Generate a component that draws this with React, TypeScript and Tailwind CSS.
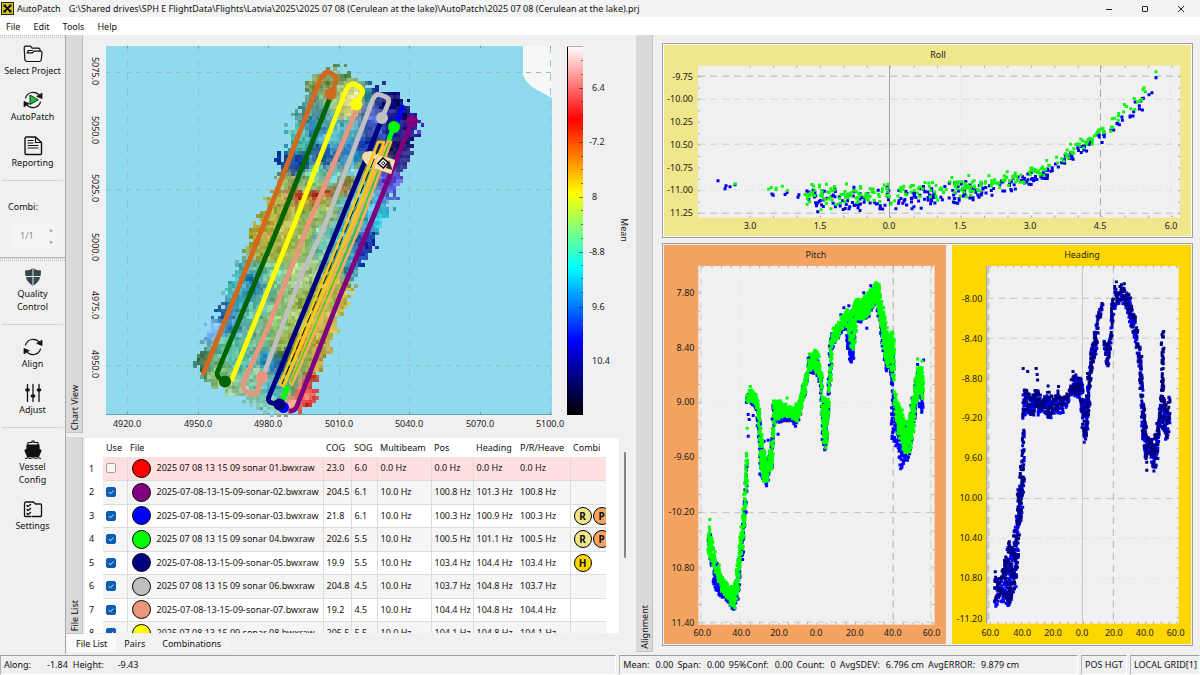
import type { ReactNode } from "react";

type Pt = [number, number];
type Band = [number, number, number];

const FONT = "font-['Noto_Sans','Open_Sans',sans-serif]";

function makeRandom(seed: number) {
  let s = seed;
  return () => {
    s = (s * 1664525 + 1013904223) % 4294967296;
    return s / 4294967296;
  };
}

/* ---------- point clouds ---------- */

function lerpAt(curve: Pt[], x: number) {
  for (let i = 1; i < curve.length; i++) {
    if (x <= curve[i][0]) {
      const [x0, y0] = curve[i - 1];
      const [x1, y1] = curve[i];
      return y0 + ((y1 - y0) * (x - x0)) / (x1 - x0);
    }
  }
  return curve[curve.length - 1][1];
}

function fillBands(bands: Band[], seed: number, step: number, spacing: number, ox: number, oy: number): Pt[] {
  const rnd = makeRandom(seed);
  const out: Pt[] = [];
  for (let i = 1; i < bands.length; i++) {
    const [x0, t0, b0] = bands[i - 1];
    const [x1, t1, b1] = bands[i];
    const n = Math.max(1, Math.round((x1 - x0) / step));
    for (let k = 0; k < n; k++) {
      const f = k / n;
      const top = t0 + (t1 - t0) * f;
      const bot = b0 + (b1 - b0) * f;
      const m = Math.max(1, Math.round((bot - top) / spacing));
      for (let j = 0; j < m; j++) {
        const x = x0 + (x1 - x0) * f + (rnd() - 0.5) * 5;
        const y = top + (bot - top) * rnd();
        out.push([ox + x / 3, oy + y / 3]);
      }
    }
  }
  return out;
}

const squares = (pts: Pt[], s: number) =>
  pts.map(([x, y]) => `M${(x - s / 2).toFixed(1)} ${(y - s / 2).toFixed(1)}h${s}v${s}h-${s}z`).join("");

const ROLL_CURVE: Pt[] = [
  [760, 189], [800, 193], [820, 196], [850, 197], [889, 196], [930, 193], [960, 190], [980, 188], [1000, 184],
  [1015, 180], [1030, 175], [1045, 170], [1060, 160], [1075, 150], [1090, 141], [1100, 133], [1115, 122],
  [1130, 110], [1140, 102], [1150, 93], [1157, 80],
];

function rollPoints(seed: number, shift: number): Pt[] {
  const rnd = makeRandom(seed);
  const out: Pt[] = [];
  const add = (n: number, a: number, b: number, spread: number) => {
    for (let i = 0; i < n; i++) {
      const x = a + (b - a) * rnd();
      out.push([x, lerpAt(ROLL_CURVE, x) + shift + (rnd() + rnd() - 1) * spread]);
    }
  };
  add(6, 762, 800, 4);
  add(150, 805, 975, 14);
  add(74, 970, 1060, 9);
  add(40, 1060, 1105, 8);
  add(18, 1110, 1148, 9);
  return out;
}

const ROLL_BLUE: Pt[] = [
  ...rollPoints(71, 2.5), [718, 180], [726, 185], [730, 186], [725, 188], [735, 184], [1156, 77], [1152, 92], [1149, 94],
  [880, 208], [849, 208], [912, 208], [858, 207],
];
const ROLL_GREEN: Pt[] = [
  ...rollPoints(19, -2.5), [735, 183], [1156, 71], [1144, 87], [1143, 89], [989, 175], [950, 181], [821, 209], [831, 208], [962, 181],
];

const PITCH_BANDS: Band[] = [
  [160, 860, 950], [165, 880, 960], [172, 905, 975], [180, 950, 1000], [190, 975, 1030], [200, 1010, 1055],
  [210, 1020, 1065], [220, 1035, 1080], [228, 1040, 1095], [236, 1040, 1105], [243, 1010, 1080], [250, 940, 1050],
  [256, 890, 980], [262, 830, 930], [268, 760, 860], [273, 660, 760], [277, 600, 700],
];
const PITCH_BANDS_2: Band[] = [
  [277, 455, 490], [285, 445, 485], [292, 450, 485], [300, 455, 490], [307, 470, 510], [313, 500, 600],
  [318, 560, 690], [325, 620, 720], [330, 650, 735], [338, 660, 720], [345, 630, 700], [352, 560, 670],
  [357, 480, 560], [365, 480, 530], [375, 480, 540], [385, 490, 530], [395, 490, 530], [405, 500, 530],
  [415, 500, 535], [425, 490, 550], [432, 480, 540], [440, 455, 500], [448, 410, 470], [456, 390, 430],
  [462, 340, 390], [470, 330, 390], [478, 325, 385], [485, 330, 395], [493, 355, 410], [500, 390, 450],
  [505, 460, 600], [512, 490, 625], [518, 450, 590], [524, 380, 450], [527, 300, 430], [533, 262, 320],
  [540, 258, 300], [550, 245, 290], [560, 230, 265], [570, 215, 255], [580, 205, 260], [587, 210, 325],
  [593, 215, 330], [600, 180, 310], [605, 175, 235], [620, 175, 235], [630, 165, 235], [640, 155, 225],
  [650, 140, 200], [658, 130, 190], [666, 122, 185], [673, 130, 220], [680, 165, 270], [688, 210, 330],
  [695, 260, 380], [703, 280, 380], [710, 270, 390], [715, 275, 420], [720, 320, 430],
];
const PITCH_BANDS_3: Band[] = [
  [720, 445, 500], [728, 480, 570], [735, 495, 600], [745, 520, 630], [755, 545, 640], [765, 520, 635],
  [773, 480, 600], [780, 430, 540], [788, 380, 480], [795, 375, 460], [803, 380, 470], [807, 400, 480],
];
const PITCH_EXTRA: Band[] = [
  [577, 270, 310], [586, 300, 365], [593, 320, 370], [599, 280, 340],
];
const PITCH_EXTRA_2: Band[] = [[712, 420, 600], [722, 520, 610], [732, 590, 640], [738, 620, 690], [750, 630, 665], [768, 610, 655]];
const PITCH_EXTRA_3: Band[] = [[793, 440, 490], [800, 460, 525], [807, 440, 520]];
const PITCH_EXTRA_4: Band[] = [[175, 1000, 1040], [190, 1040, 1070], [215, 1060, 1090], [236, 1080, 1105]];

const PITCH_GREEN: Pt[] = [
  ...fillBands(PITCH_BANDS, 3, 2.6, 8, 655, 240),
  ...fillBands(PITCH_BANDS_2, 4, 2.6, 8, 655, 240),
  ...fillBands(PITCH_BANDS_3, 5, 2.6, 8, 655, 240),
  [709.5, 519.5], [709, 527], [709, 533], [747, 428], [750, 386], [918, 358.5], [922.5, 360.5], [787, 397.5],
];
const PITCH_BLUE: Pt[] = [
  ...fillBands(PITCH_BANDS, 13, 3, 11, 655.3, 244),
  ...fillBands(PITCH_BANDS_2, 14, 3, 11, 654.3, 244),
  ...fillBands(PITCH_BANDS_3, 15, 3, 11, 654.3, 245),
  ...fillBands(PITCH_EXTRA, 23, 3, 9, 655, 240),
  ...fillBands(PITCH_EXTRA_2, 24, 3, 13, 655, 240),
  ...fillBands(PITCH_EXTRA_3, 25, 3, 12, 655, 240),
  ...fillBands(PITCH_EXTRA_4, 26, 3, 9, 655, 240),
  [748, 436], [748, 414], [749, 419], [753, 415], [844, 307], [841, 314], [849, 305], [871, 285], [867, 327.5],
  [864, 292], [924, 359.5], [918, 364], [778, 434], [768, 440], [764, 441], [901, 468.5],
];

const HEADING_BANDS: Band[] = [
  [150, 1005, 1095], [157, 1010, 1080], [165, 1020, 1070], [172, 990, 1085], [182, 950, 1080], [190, 900, 1095],
  [198, 920, 1090], [205, 880, 1060], [212, 850, 1040], [218, 760, 960], [223, 720, 850], [228, 680, 840],
  [233, 590, 780], [236, 565, 720], [239, 565, 680],
];
const HEADING_BANDS_2: Band[] = [
  [235, 440, 530], [245, 450, 510], [252, 460, 530], [262, 470, 530], [272, 440, 500], [280, 450, 530],
  [290, 485, 510], [300, 460, 510], [310, 450, 540], [320, 470, 520], [330, 470, 515], [340, 450, 510],
  [350, 470, 515], [360, 460, 500], [370, 455, 480], [378, 425, 455], [386, 400, 460], [395, 395, 460],
  [403, 400, 470], [411, 420, 520], [416, 460, 590], [420, 500, 600], [425, 460, 580], [430, 400, 540],
  [435, 370, 450], [440, 320, 400], [447, 280, 370], [455, 230, 320], [462, 205, 240], [470, 185, 210],
  [476, 180, 205],
];
const HEADING_BANDS_3: Band[] = [
  [479, 285, 320], [485, 310, 360], [490, 320, 385], [496, 280, 350], [500, 190, 300], [505, 160, 220],
  [512, 135, 190], [520, 150, 185], [530, 130, 185], [540, 140, 195], [548, 150, 195], [556, 165, 240],
  [563, 200, 260], [570, 220, 290], [578, 270, 330], [585, 310, 420], [590, 340, 510], [595, 480, 600],
  [600, 510, 640], [606, 580, 660], [612, 590, 640], [620, 590, 660], [628, 610, 705], [635, 560, 680],
  [640, 540, 620], [646, 480, 560], [652, 460, 540], [660, 480, 590], [667, 500, 595], [674, 460, 560],
  [678, 450, 540],
];
const HEADING_STRIP: Band[] = [[652, 265, 460], [657, 265, 460]];
const headingCloud = (seed: number, spacing: number, dy: number) => [
  ...fillBands(HEADING_BANDS, seed, 3, spacing + 3, 945, 240 + dy),
  ...fillBands(HEADING_BANDS_2, seed + 1, 3, spacing, 945, 240 + dy),
  ...fillBands(HEADING_BANDS_3, seed + 2, 3, spacing, 945, 240 + dy),
];
const HEADING_BLUE: Pt[] = headingCloud(31, 13, 2.5);
const HEADING_NAVY: Pt[] = [
  ...headingCloud(57, 17, -0.5),
  ...fillBands(HEADING_STRIP, 61, 2, 13, 945, 240),
  [1023, 368], [1027.5, 371], [1036, 368], [1037, 374], [1037.5, 379.5], [995, 572], [1116.5, 281], [1124.5, 283],
  [1058.5, 386], [1073, 371], [1147, 470], [1147, 462], [1048, 385.5],
];

/* ---------- depth surface ---------- */

const SWATH: Pt[] = [
  [310, 75], [322, 68], [336, 65], [348, 73], [366, 84], [380, 85], [394, 91], [405, 104], [418, 116], [416, 132],
  [409, 150], [403, 170], [394, 193], [383, 210], [376, 228], [369, 250], [361, 264], [352, 280], [344, 303],
  [337, 323], [327, 353], [316, 377], [314, 393], [303, 407], [290, 412], [267, 412], [250, 402], [232, 390],
  [208, 384], [192, 363], [205, 333], [215, 310], [227, 287], [241, 260], [249, 236], [252, 222], [264, 203],
  [276, 173], [276, 157], [288, 150], [287, 127], [298, 107],
];

const SAMPLES: [number, number, number][] = [
  [320, 80, 0x7f9d5a], [340, 72, 0x6a9a60], [352, 92, 0xd8dc80], [345, 106, 0xd8d070], [333, 100, 0x90c080],
  [305, 110, 0x4a8a80], [298, 130, 0x58c0b8], [312, 125, 0x2a7ab0], [325, 115, 0x58a8b0], [366, 92, 0x308890],
  [377, 91, 0x101890], [387, 100, 0x0a0a70], [400, 113, 0x101078], [411, 128, 0x3018a0], [370, 112, 0x5868c8],
  [372, 125, 0x3050b8], [390, 118, 0x141488], [405, 143, 0x181868], [400, 156, 0x303090], [390, 150, 0x202060],
  [280, 158, 0x0a3a9a], [296, 161, 0x1040a0], [322, 152, 0x1850a0], [340, 146, 0x3080c0], [295, 142, 0x40b0a0],
  [330, 138, 0x60c8d0], [345, 128, 0x50b8c0], [353, 155, 0x2a90d0], [364, 145, 0x1030a0], [312, 174, 0x70d0a0],
  [330, 176, 0x60d0d8], [352, 170, 0x70d0e8], [284, 182, 0x90b860], [280, 198, 0xb0b048], [290, 191, 0xd07850],
  [300, 193, 0xc02818], [313, 194, 0xb81808], [325, 190, 0xb83018], [338, 186, 0xa85018], [348, 178, 0x90882c],
  [300, 186, 0x88c070], [315, 186, 0x80c880], [328, 183, 0x78c8a0], [306, 200, 0x988828], [322, 198, 0x90a040],
  [336, 193, 0x88a858],
  [360, 165, 0x80a050], [366, 170, 0x60b070], [268, 210, 0xa0a838], [262, 228, 0xb8a840], [300, 208, 0x88b850],
  [320, 206, 0x98c868], [340, 200, 0x60c0c0], [356, 190, 0x60c8e0], [386, 180, 0x5a40d0], [390, 190, 0x5868d8],
  [372, 200, 0x50b0d8], [378, 215, 0x30c0d8], [252, 235, 0xa8a030], [262, 250, 0xa0a840], [240, 268, 0x50a8a0],
  [300, 235, 0x90b850], [284, 225, 0xc0b850], [280, 245, 0x98a840], [320, 240, 0x70c8b0], [338, 232, 0x50c0d0],
  [348, 255, 0x40a0c0], [366, 246, 0x102aa0], [360, 260, 0x1840b0], [352, 268, 0x3890a0], [270, 270, 0x78c8a0],
  [300, 275, 0xa8d088], [320, 290, 0xa0b840], [308, 300, 0x90a840], [335, 286, 0xa8b048], [345, 295, 0xc8b850],
  [234, 285, 0x48c0c0], [248, 280, 0x2880a8], [219, 311, 0x1858a0], [226, 320, 0x3888b8], [211, 328, 0x78b8f0],
  [250, 310, 0x60b8a0], [275, 320, 0x90c878], [240, 297, 0x309ab0], [300, 320, 0xa8c860], [260, 340, 0x70b890],
  [225, 345, 0x60c0a0], [200, 360, 0x407850], [196, 367, 0x308078], [215, 370, 0x78b870], [240, 360, 0x50b0a0],
  [280, 340, 0x98b048], [284, 352, 0x487838], [276, 364, 0x2868a8], [266, 358, 0x2890c0], [300, 343, 0xb09030],
  [318, 335, 0xb8a840], [330, 325, 0xc8b850], [300, 362, 0x80b050], [316, 362, 0xc0a040], [311, 382, 0xc03838],
  [300, 393, 0xe87060], [293, 402, 0xf0a090], [305, 403, 0xd03030], [250, 388, 0x80c0a0], [266, 403, 0x80c8b0],
  [255, 374, 0x90d0a8], [285, 385, 0x50b878], [222, 385, 0xa0c880], [270, 386, 0x50b0c8],
];

function inside(x: number, y: number) {
  let hit = false;
  for (let i = 0, j = SWATH.length - 1; i < SWATH.length; j = i++) {
    const [xi, yi] = SWATH[i];
    const [xj, yj] = SWATH[j];
    if (yi > y !== yj > y && x < ((xj - xi) * (y - yi)) / (yj - yi) + xi) hit = !hit;
  }
  return hit;
}

const CELL = 3.5;
const SURFACE: { x: number; y: number; c: string }[] = (() => {
  const rnd = makeRandom(99);
  const cells: { x: number; y: number; c: string }[] = [];
  for (let y = 60; y < 414; y += CELL) {
    for (let x = 186; x < 424; x += CELL) {
      const jx = x + (rnd() - 0.5) * 4;
      const jy = y + (rnd() - 0.5) * 4;
      const ex = x + (rnd() - 0.5) * 11;
      const ey = y + (rnd() - 0.5) * 11;
      const ripple = Math.sin(x * 0.16 + y * 0.42) * 9 + Math.sin(x * 0.31 - y * 0.13 + 2) * 7;
      const noise = (rnd() + rnd() - 1) * 30 + ripple + 4;
      const tint = (rnd() - 0.5) * 22;
      if (!inside(ex, ey)) continue;
      let r = 0, g = 0, b = 0, w = 0;
      for (const [sx, sy, c] of SAMPLES) {
        const d = (sx - jx) ** 2 + (sy - jy) ** 2 + 14;
        const k = 1 / (d * d);
        r += ((c >> 16) & 255) * k;
        g += ((c >> 8) & 255) * k;
        b += (c & 255) * k;
        w += k;
      }
      const f = (v: number, t: number) => Math.max(0, Math.min(255, Math.round(v / w + noise + t)));
      cells.push({ x, y, c: `rgb(${f(r, tint)},${f(g, 0)},${f(b, -tint)})` });
    }
  }
  return cells;
})();

/* ---------- charts ---------- */

function ChartText({ x, y, children, anchor = "middle", turn = false }: {
  x: number; y: number; children: ReactNode; anchor?: "start" | "middle" | "end"; turn?: boolean;
}) {
  return (
    <text
      x={x} y={y + 3} textAnchor={anchor} className="fill-[#1a1a1a] text-[9px]"
      transform={turn ? `rotate(90 ${x} ${y})` : undefined}
    >
      {children}
    </text>
  );
}

type Tick = [string, number];

function ScatterChart({ title, titleX, titleY, box, viewBox, bg, xTicks, yTicks, xLabelY, yLabelX, vLines, hLines, minorX, minorY, children }: {
  title: string; titleX: number; titleY: number; box: [number, number, number, number]; viewBox: string; bg: string;
  xTicks: Tick[]; yTicks: Tick[]; xLabelY: number; yLabelX: number;
  vLines: [number, string, boolean][]; hLines: [number, string][]; minorX: number; minorY: number; children: ReactNode;
}) {
  const [x0, y0, x1, y1] = box;
  const ticks: string[] = [];
  for (let x = xTicks[0][1]; x < x1; x += minorX) ticks.push(`M${x} ${y0}v2M${x} ${y1}v-2`);
  for (let y = yTicks[0][1]; y < y1; y += minorY) ticks.push(`M${x0} ${y}h2M${x1 - 2} ${y}h2`);
  return (
    <svg viewBox={viewBox} className={`block h-full w-full ${bg}`} role="img" aria-label={title}>
      <rect x={x0} y={y0} width={x1 - x0} height={y1 - y0} fill="#f0f0f0" />
      {hLines.map(([y, c]) => (
        <path key={y} d={`M${x0} ${y}H${x1}`} stroke={c} strokeDasharray="7 5" />
      ))}
      {vLines.map(([x, c, solid]) => (
        <path key={x} d={`M${x} ${y0}V${y1}`} stroke={c} strokeDasharray={solid ? undefined : "7 5"} />
      ))}
      <path d={ticks.join("")} stroke="#a8a8a8" />
      {children}
      <ChartText x={titleX} y={titleY}>{title}</ChartText>
      {xTicks.map(([t, x]) => <ChartText key={x} x={x} y={xLabelY}>{t}</ChartText>)}
      {yTicks.map(([t, y]) => <ChartText key={y} x={yLabelX} y={y} anchor="end">{t}</ChartText>)}
    </svg>
  );
}

function RollChart() {
  return (
    <ScatterChart
      title="Roll" titleX={938} titleY={54} box={[698, 65, 1180, 217]} viewBox="664 45 527 190" bg="bg-[#f0e68c]"
      xLabelY={225} yLabelX={693} minorX={23.45} minorY={11.4}
      xTicks={[["3.0", 750], ["1.5", 820], ["0.0", 889], ["1.5", 960], ["3.0", 1030], ["4.5", 1100], ["6.0", 1171]]}
      yTicks={[["-9.75", 76], ["-10.00", 98], ["10.25", 121], ["10.50", 144], ["-10.75", 167], ["-11.00", 189], ["11.25", 212]]}
      vLines={[[889.5, "#a8a8a8", true], [960.5, "#e8e8e8", false], [1100.5, "#a8a8a8", false], [1170.5, "#e6e6e6", false]]}
      hLines={[[75.5, "#b4b4b4"], [98.5, "#d8d8d8"], [143.5, "#cccccc"], [189.5, "#e2e2e2"], [212.5, "#bcbcbc"]]}
    >
      <path d={squares(ROLL_BLUE, 3)} fill="#0000e6" />
      <path d={squares(ROLL_GREEN, 3)} fill="#10f510" />
    </ScatterChart>
  );
}

function PitchChart() {
  return (
    <ScatterChart
      title="Pitch" titleX={816} titleY={254} box={[698, 265, 935, 625]} viewBox="664 244 282 400" bg="bg-[#f4a460]"
      xLabelY={633} yLabelX={694} minorX={9.6} minorY={18.4}
      xTicks={[["60.0", 702], ["40.0", 741], ["20.0", 779], ["0.0", 816], ["20.0", 855], ["40.0", 893], ["60.0", 932]]}
      yTicks={[["7.80", 292], ["8.40", 347], ["9.00", 402], ["-9.60", 457], ["-10.20", 512], ["10.80", 568], ["11.40", 623]]}
      vLines={[[700.5, "#cccccc", false], [739.5, "#e8e8e8", false], [893.5, "#b0b0b0", false], [931.5, "#cccccc", false]]}
      hLines={[[402.5, "#e8e8e8"], [512.5, "#c4c4c4"], [622.5, "#c8c8c8"]]}
    >
      <path d={squares(PITCH_BLUE, 3)} fill="#0000ff" />
      <path d={squares(PITCH_GREEN, 3)} fill="#00ff00" />
    </ScatterChart>
  );
}

function HeadingChart() {
  return (
    <ScatterChart
      title="Heading" titleX={1082} titleY={254} box={[986, 265, 1179, 624]} viewBox="952 244 239 400" bg="bg-[#ffd700]"
      xLabelY={633} yLabelX={982} minorX={7.8} minorY={10}
      xTicks={[["60.0", 990], ["40.0", 1022], ["20.0", 1053], ["0.0", 1082], ["20.0", 1114], ["40.0", 1145], ["60.0", 1176]]}
      yTicks={[["-8.00", 298], ["-8.40", 338], ["-8.80", 378], ["-9.20", 418], ["9.60", 458], ["10.00", 498], ["10.40", 538], ["10.80", 578], ["-11.20", 619]]}
      vLines={[[986.5, "#8a8a8a", true], [988.5, "#b0b0b0", false], [1082.5, "#c8c8c8", true], [1113.5, "#b4b4b4", false]]}
      hLines={[[297.5, "#c0c0c0"], [337.5, "#cccccc"], [498.5, "#c4c4c4"], [538.5, "#e2e2e2"], [578.5, "#e8e8e8"]]}
    >
      <path d={squares(HEADING_BLUE, 3)} fill="#0000ff" />
      <path d={squares(HEADING_NAVY, 3)} fill="#000080" />
    </ScatterChart>
  );
}

function MapChart() {
  const top = [127.5, 198.5, 268.5, 339.5, 409.5, 480.5, 550.5];
  return (
    <svg viewBox="83 35 552 398" className="block h-full w-full" role="img" aria-label="Chart View">
      <defs>
        <linearGradient id="depth" x1="0" y1="0" x2="0" y2="1">
          <stop offset="0" stopColor="#fff" />
          <stop offset="0.2" stopColor="#f00" />
          <stop offset="0.4" stopColor="#ff0" />
          <stop offset="0.6" stopColor="#0ff" />
          <stop offset="0.8" stopColor="#00f" />
          <stop offset="1" stopColor="#000" />
        </linearGradient>
      </defs>
      <rect x="106" y="46" width="446" height="369" fill="#8fdaed" />
      <path d="M523 46V75L526 81L532 87L552 98V46Z" fill="#f7f7f7" />
      <path d="M106 72.5H552M106 189.5H552M106 365.5H552" stroke="#96bcc8" strokeDasharray="5 5" />
      <path d="M127.5 46V414M198.5 46V414M339.5 46V414M409.5 46V414M550.5 46V414" stroke="#94c4d2" strokeDasharray="7 7" />
      <path d={top.map((x) => `M${x} 46v2M${x} 414v-2`).join("")} stroke="#7a9aa4" />
      <path d="M106 414.5H552" stroke="#5f9fb8" />
      <g shapeRendering="crispEdges">
        {SURFACE.map((c, i) => <rect key={i} x={c.x} y={c.y} width={CELL} height={CELL} fill={c.c} />)}
      </g>
      <g fill="none" strokeWidth="4.8" strokeLinecap="round" strokeLinejoin="round">
        <path d="M203.500 373L240 284L262 229L320 80Q324 71 329 72L334 75Q338 78 335 84L331 93" stroke="#d2691e" />
        <path d="M330 98L277 230L217 373Q217 378 225 382" stroke="#006400" />
        <path d="M232 379L292 230L346 90Q349 83 354 84L360 87Q364 90 362 94L357 104" stroke="#ff0" />
        <path d="M355.500 112L306 230L268 327L243 384Q243 390 246 392L252 394Q256 395 258 390L262 377" stroke="#e9967a" />
        <path d="M382 118L388 104Q390 99 386 97L381 95Q376 93 373 99L323 230L303 271L265 371" stroke="#c0c0c0" />
        <path d="M380 124L337 230L268.500 398Q268 402 272 403L280 405" stroke="#000080" />
        <path d="M402.500 107L392 136" stroke="#00f" />
        <path d="M393.500 127L389 140M287 388L283 399" stroke="#0f0" />
        <path d="M412 121L368 230L340 296L297 406Q295 411 291 411" stroke="#800080" />
      </g>
      <g stroke="none">
        <circle cx="330.500" cy="94" r="6" fill="#d2691e" />
        <circle cx="225" cy="381.500" r="6" fill="#006400" />
        <circle cx="356.500" cy="104.500" r="6" fill="#ff0" />
        <circle cx="262" cy="377" r="6" fill="#e9967a" />
        <circle cx="382" cy="118" r="6" fill="#c0c0c0" />
        <circle cx="283.500" cy="407.500" r="5.500" fill="#00f" />
        <circle cx="279.500" cy="404.500" r="6" fill="#000080" />
        <circle cx="394" cy="127" r="6" fill="#0f0" />
        <circle cx="412" cy="121" r="6" fill="#800080" />
      </g>
      <path d="M362 157Q362 151 371 151L395 160L391 174L370 166Q364 164 362 157Z" fill="#f5deaa" />
      <g fill="none" strokeLinejoin="round" strokeLinecap="round">
        <path d="M378 142L384 142L349 231L283 386L280 384L344 230Z" stroke="#ffc61a" strokeWidth="2.600" />
        <path d="M379.500 146L346 229L282 384" stroke="#111" strokeWidth="1" strokeDasharray="9 5" />
        <path d="M384 146L349 233L285 384" stroke="#ffc61a" strokeWidth="2" />
        <path d="M388 141L391 142L358 231L292 385L290 383L353 229Z" stroke="#f4b058" strokeWidth="2.600" />
        <path d="M389 143L355.500 230L291 382" stroke="#2fe000" strokeWidth="1.200" />
      </g>
      <path d="M378 155L395 161L391 174L374 168Z" fill="#f7dcae" />
      <path d="M389 160L392.500 170L386 168Z" fill="#3a2440" />
      <path d="M383 158L388 162.500L383.500 168L378 163.500Z" fill="#fff" stroke="#000" strokeWidth="1.500" />
      <path d="M383 161.500L385 163L383.300 165L381.300 163.300Z" fill="#fff" stroke="#000" strokeWidth="0.900" />

      {["5075.0", "5050.0", "5025.0", "5000.0", "4975.0", "4950.0"].map((t, i) => (
        <ChartText key={t} x={95} y={71 + Math.round(i * 58.600)} turn>{t}</ChartText>
      ))}
      {["4920.0", "4950.0", "4980.0", "5010.0", "5040.0", "5070.0", "5100.0"].map((t, i) => (
        <ChartText key={t} x={127 + Math.round(i * 70.500)} y={424}>{t}</ChartText>
      ))}
      <rect x="567" y="46" width="16" height="369" fill="url(#depth)" />
      <path d="M567.500 46V415M567 414.500H583" stroke="#000" />
      <path d="M567 46.500H583" stroke="#d8a090" />
      {[60, 74, 101, 115, 128, 156, 169, 183, 210, 224, 238, 265, 278, 292, 320, 333, 347].map((y) => (
        <path key={y} d={`M581 ${y + 0.5}h2`} stroke="#222" strokeOpacity="0.600" />
      ))}
      {([["6.4", 88, 592], ["-7.2", 142, 589], ["8", 197, 592], ["-8.8", 252, 589], ["9.6", 307, 592], ["10.4", 361, 592]] as [string, number, number][]).map(([t, y, x]) => (
        <g key={t}>
          <path d={`M579 ${y + 0.5}h4`} stroke="#222" strokeOpacity="0.600" />
          <ChartText x={x} y={y} anchor="start">{t}</ChartText>
        </g>
      ))}
      <ChartText x={624} y={230} turn>Mean</ChartText>
    </svg>
  );
}

/* ---------- icons ---------- */

function Icon({ children }: { children: ReactNode }) {
  return (
    <svg viewBox="0 0 20 20" className="h-5 w-5 shrink-0" fill="none" stroke="#111" strokeWidth="1.200" strokeLinejoin="round" strokeLinecap="round" aria-hidden="true">
      {children}
    </svg>
  );
}

const FolderIcon = () => (
  <Icon>
    <path d="M4.500 17.500Q2 17.500 1.800 15L1.200 3.500Q1.200 2.200 2.500 2.200H7.500L9 4.200H15.500Q17 4.200 17 5.500V7" />
    <path d="M4.500 17.500H16.500Q18 17.500 18.200 16L19 9Q19.200 7.200 17.500 7.200H11L9.500 8.800H4" />
    <path d="M5 8.500V6.500H9.500" />
  </Icon>
);
const arrows = (
  <>
    <path d="M2.500 8A8 8 0 0 1 16.500 5.500M17.500 12A8 8 0 0 1 3.500 14.500" />
    <path d="M19 3.500V8.500L14 6.500ZM1 16.500V11.500L6 13.500Z" fill="#111" strokeWidth="0.800" />
  </>
);
const SyncIcon = () => <Icon>{arrows}</Icon>;
const AutoPatchIcon = () => (
  <Icon>
    {arrows}
    <path d="M7 5.500V14.500L15 10Z" fill="#12c832" strokeWidth="0.900" />
  </Icon>
);
const ReportIcon = () => (
  <Icon>
    <path d="M3.500 1H12.500L18.500 6.500V17.500Q18.500 18.500 17.500 18.500H3.500Q2 18.500 2 17V2.500Q2 1 3.500 1Z" strokeWidth="1.400" />
    <path d="M12.500 1.500V6.500H18M5 4.500H10M5 7H10M5 9.500H15M5 12H15" />
  </Icon>
);
const ShieldIcon = () => (
  <Icon>
    <path d="M10 1Q13 3.500 18 3.500Q18.500 14 10 19Q1.500 14 2 3.500Q7 3.500 10 1Z" fill="#33474d" stroke="none" />
    <path d="M10 1V19M2 9.500H18" stroke="#e6eaeb" strokeWidth="1" />
  </Icon>
);
const AdjustIcon = () => (
  <Icon>
    <path d="M4.500 1.500V18.500M10 1.500V18.500M16 1.500V18.500" strokeWidth="1.300" />
    <path d="M3.500 7H5.500M9 13H11M15 7H17" strokeWidth="2.800" />
  </Icon>
);
const ShipIcon = () => (
  <Icon>
    <path d="M5 5V2.500H9V1H11V2.500H15V5" />
    <path d="M4 5H16V9L18 10.500L15.500 16.500H4.500L2 10.500L4 9Z" fill="#111" />
    <path d="M2.500 18.500Q5 17 7 18.500Q10 17 13 18.500Q15 17 17.500 18.500" />
  </Icon>
);
const SettingsIcon = () => (
  <Icon>
    <path d="M9.500 17.500H17.500Q18.500 17.500 18.500 16.500V6Q18.500 5 17.500 5H12.500L10.500 3H3Q1.500 3 1.500 4.500V16.500Q1.500 17.500 2.500 17.500H8" strokeWidth="1.300" />
    <path d="M4 6.500L5 7.500L7.500 5.500M4 10.500L5 11.500L7.500 9.500M4 14.500L5 15.500L7.500 13.500" strokeWidth="1.400" />
  </Icon>
);

/* ---------- shell ---------- */

function ToolButton({ icon, children }: { icon: ReactNode; children: ReactNode }) {
  return (
    <button type="button" className="flex w-full flex-col items-center leading-[13px]">
      {icon}
      <span className="text-center whitespace-nowrap">{children}</span>
    </button>
  );
}

const Rule = () => <hr className="mx-[2px] border-0 border-t border-[#d2d2d2]" />;
const Grip = () => <div className="h-[3px] border-y border-dotted border-[#c4c4c4]" />;

function Sidebar() {
  return (
    <aside className="flex w-[66px] shrink-0 flex-col border-r border-[#a8a8a8]">
      <Grip />
      <div className="flex flex-col gap-[13px] pt-[6px] pb-[11px]">
        <ToolButton icon={<FolderIcon />}>Select Project</ToolButton>
        <ToolButton icon={<AutoPatchIcon />}>AutoPatch</ToolButton>
        <ToolButton icon={<ReportIcon />}>Reporting</ToolButton>
      </div>
      <Rule />
      <div className="flex flex-col gap-[10px] pt-[19px] pb-2">
        <label htmlFor="combi" className="pl-2 leading-[13px]">Combi:</label>
        <div className="ml-3 mr-2 flex h-[26px] bg-[#f4f4f4]">
          <input id="combi" disabled defaultValue="1/1" className="w-8 bg-transparent pl-2 text-[#8a8a8a]" />
          <div className="flex flex-1 flex-col items-center justify-around text-[#9a9a9a]">
            <button type="button" aria-label="Next combination" className="block">
              <svg viewBox="0 0 6 4" className="h-1 w-[6px]"><path d="M1 3.500L3 1L5 3.500Z" fill="currentColor" /></svg>
            </button>
            <button type="button" aria-label="Previous combination" className="block">
              <svg viewBox="0 0 6 4" className="h-1 w-[6px]"><path d="M1 .5L3 3L5 .5Z" fill="currentColor" /></svg>
            </button>
          </div>
        </div>
      </div>
      <hr className="border-0 border-t border-[#b4b4b4]" />
      <Grip />
      <div className="pt-[6px] pb-[11px]">
        <ToolButton icon={<ShieldIcon />}>Quality<br />Control</ToolButton>
      </div>
      <Rule />
      <div className="flex flex-col gap-[13px] pt-3 pb-[11px]">
        <ToolButton icon={<SyncIcon />}>Align</ToolButton>
        <ToolButton icon={<AdjustIcon />}>Adjust</ToolButton>
      </div>
      <Rule />
      <div className="flex flex-col gap-[13px] pt-3">
        <ToolButton icon={<ShipIcon />}>Vessel<br />Config</ToolButton>
        <ToolButton icon={<SettingsIcon />}>Settings</ToolButton>
      </div>
    </aside>
  );
}

function DockTitle({ children }: { children: string }) {
  return (
    <div className="flex w-[17px] shrink-0 items-end justify-center border-r border-b border-[#c2c2c2] bg-[#dadada] pb-[2px] pl-px">
      <h2 className="rotate-180 leading-3 [writing-mode:vertical-rl]">{children}</h2>
    </div>
  );
}

const ROWS: { file: string; color: string; cells: string[]; combi: string; off?: boolean }[] = [
  { file: "2025 07 08 13 15 09 sonar 01.bwxraw", color: "bg-[#ff0000]", cells: ["23.0", "6.0", "0.0 Hz", "0.0 Hz", "0.0 Hz", "0.0 Hz"], combi: "", off: true },
  { file: "2025-07-08-13-15-09-sonar-02.bwxraw", color: "bg-[#800080]", cells: ["204.5", "6.1", "10.0 Hz", "100.8 Hz", "101.3 Hz", "100.8 Hz"], combi: "" },
  { file: "2025-07-08-13-15-09-sonar-03.bwxraw", color: "bg-[#0000ff]", cells: ["21.8", "6.1", "10.0 Hz", "100.3 Hz", "100.9 Hz", "100.3 Hz"], combi: "RP" },
  { file: "2025 07 08 13 15 09 sonar 04.bwxraw", color: "bg-[#00ff00]", cells: ["202.6", "5.5", "10.0 Hz", "100.5 Hz", "101.1 Hz", "100.5 Hz"], combi: "RP" },
  { file: "2025-07-08-13-15-09-sonar-05.bwxraw", color: "bg-[#000080]", cells: ["19.9", "5.5", "10.0 Hz", "103.4 Hz", "104.4 Hz", "103.4 Hz"], combi: "H" },
  { file: "2025 07 08 13 15 09 sonar 06.bwxraw", color: "bg-[#c0c0c0]", cells: ["204.8", "4.5", "10.0 Hz", "103.7 Hz", "104.8 Hz", "103.7 Hz"], combi: "" },
  { file: "2025-07-08-13-15-09-sonar-07.bwxraw", color: "bg-[#e9967a]", cells: ["19.2", "4.5", "10.0 Hz", "104.4 Hz", "104.8 Hz", "104.4 Hz"], combi: "" },
  { file: "2025 07 08 13 15 09 sonar 08.bwxraw", color: "bg-[#ffff00]", cells: ["205.5", "5.5", "10.0 Hz", "104.1 Hz", "104.8 Hz", "104.1 Hz"], combi: "" },
];

const BADGE: Record<string, string> = { R: "bg-[#f0e68c]", P: "bg-[#f4a460]", H: "bg-[#ffd700]" };

function FileTable() {
  return (
    <div className="flex min-w-0 flex-1 pt-px pr-[3px] pb-px pl-[2px]">
      <div className="min-w-0 flex-1 overflow-hidden bg-white pr-[13px]">
        <table className="w-full table-fixed border-collapse whitespace-nowrap">
          <colgroup>
            <col className="w-[18px]" /><col className="w-6" /><col /><col className="w-7" /><col className="w-[26px]" />
            <col className="w-[54px]" /><col className="w-[42px]" /><col className="w-11" /><col className="w-[53px]" /><col className="w-9" />
          </colgroup>
          <thead>
            <tr className="h-[19px] text-left">
              <td />
              {["Use", "File", "COG", "SOG", "Multibeam", "Pos", "Heading", "P/R/Heave", "Combi"].map((h) => (
                <th key={h} className="p-0 pl-[3px] font-normal">{h}</th>
              ))}
            </tr>
          </thead>
          <tbody>
            {ROWS.map((r, i) => (
              <tr key={r.file} className="h-[23px] even:h-6">
                <td className="p-0 pl-1">{i + 1}</td>
                <td className={`border-b border-[#dcdcdc] p-0 pl-[3px] ${r.off ? "bg-[#ffe0e0]" : i % 2 ? "bg-[#f5f5f5]" : "bg-white"}`}>
                  <span className="grid h-[10px] w-[10px]">
                    <input
                      type="checkbox" defaultChecked={!r.off} aria-label={`Use ${r.file}`}
                      className="peer col-start-1 row-start-1 h-[10px] w-[10px] appearance-none rounded-[2px] border border-[#a0a0a0] bg-[#f6f6f6] checked:border-[#0a5cb4] checked:bg-[#0a5cb4]"
                    />
                    <svg viewBox="0 0 10 10" className="pointer-events-none col-start-1 row-start-1 hidden h-[10px] w-[10px] peer-checked:block">
                      <path d="M2.800 5.200L4.400 6.700L7.400 3.700" fill="none" stroke="#e4eefa" />
                    </svg>
                  </span>
                </td>
                <td className={`border-b border-l border-[#dcdcdc] p-0 pl-1 ${r.off ? "bg-[#ffe0e0]" : i % 2 ? "bg-[#f5f5f5]" : "bg-white"}`}>
                  <span className="flex items-center gap-[6px]">
                    <span className={`h-[19px] w-[19px] shrink-0 rounded-full border border-black ${r.color}`} />
                    {r.file}
                  </span>
                </td>
                {r.cells.map((c, k) => (
                  <td key={k} className={`border-b border-[#dcdcdc] p-0 pl-[3px] ${k === 5 ? "" : "border-l"} ${r.off ? "bg-[#ffe0e0]" : i % 2 ? "bg-[#f5f5f5]" : "bg-white"}`}>
                    {c}
                  </td>
                ))}
                <td className={`overflow-hidden border-b border-l border-[#dcdcdc] p-0 pl-[3px] ${r.off ? "bg-[#ffe0e0]" : i % 2 ? "bg-[#f5f5f5]" : "bg-white"}`}>
                  <span className="flex gap-px">
                    {r.combi.split("").map((b) => (
                      <span key={b} className={`grid h-[18px] w-[18px] shrink-0 place-items-center rounded-full border border-black text-[10px] leading-none font-bold ${BADGE[b]}`}>{b}</span>
                    ))}
                  </span>
                </td>
              </tr>
            ))}
          </tbody>
        </table>
      </div>
      <div className="flex w-[13px] shrink-0 justify-center pt-[14px] pr-px">
        <div className="h-[106px] w-[2px] rounded bg-[#858585]" />
      </div>
    </div>
  );
}

function Pane({ children, className }: { children: ReactNode; className: string }) {
  return (
    <div className={`flex items-center border border-t-[#9c9c9c] border-r-white border-b-white border-l-[#b4b4b4] pl-[3px] whitespace-nowrap ${className}`}>
      {children}
    </div>
  );
}

export default function App() {
  return (
    <div className={`flex h-screen min-h-[660px] flex-col overflow-hidden bg-[#f0f0f0] text-[9px] leading-3 text-[#111] ${FONT}`}>
      <header className="flex h-[17px] shrink-0 items-center bg-[#f3f3f3] pl-px">
        <svg viewBox="0 0 13 13" className="mr-[3px] h-[13px] w-[13px]" aria-hidden="true">
          <rect width="13" height="13" fill="#26220a" />
          <rect x="1" y="1" width="11" height="11" fill="#d8c81e" />
          <path d="M3.500 3.500L9.500 9.500M9.500 3.500L3.500 9.500" stroke="#111" strokeWidth="1.800" />
          <path d="M2.500 2.500h2.500v2.500h-2.500zM8 2.500h2.500v2.500h-2.500zM2.500 8h2.500v2.500h-2.500zM8 8h2.500v2.500h-2.500z" fill="#111" />
        </svg>
        <h1 className="flex flex-1 gap-2 whitespace-nowrap">
          <span>AutoPatch</span>
          <span>G:\Shared drives\SPH E FlightData\Flights\Latvia\2025\2025 07 08 (Cerulean at the lake)\AutoPatch\2025 07 08 (Cerulean at the lake).prj</span>
        </h1>
        <div className="flex pr-px">
          {[["Minimize", "M2 5.500H8"], ["Maximize", "M3 2.500H7Q7.500 2.500 7.500 3V7Q7.500 7.500 7 7.500H3Q2.500 7.500 2.500 7V3Q2.500 2.500 3 2.500Z"], ["Close", "M2 2L8 8M8 2L2 8"]].map(([label, d]) => (
            <button key={label} type="button" aria-label={label} className="grid w-9 place-items-center">
              <svg viewBox="0 0 10 10" className="h-[10px] w-[10px]" fill="none" stroke="#222"><path d={d} /></svg>
            </button>
          ))}
        </div>
      </header>
      <nav className="flex h-[18px] shrink-0 items-center gap-[13px] bg-white pt-px pl-[6px]">
        {["File", "Edit", "Tools", "Help"].map((m) => <button key={m} type="button">{m}</button>)}
      </nav>

      <main className="flex min-h-0 flex-1">
        <Sidebar />
        <section className="flex min-w-0 flex-[570] basis-0 flex-col">
          <div className="flex min-h-0 flex-[398] basis-0">
            <DockTitle>Chart View</DockTitle>
            <div className="min-h-0 min-w-0 flex-1 pr-px"><MapChart /></div>
          </div>
          <div className="mt-1 flex min-h-0 flex-[197] basis-0">
            <DockTitle>File List</DockTitle>
            <div className="flex min-h-0 min-w-0 flex-1 pr-px"><FileTable /></div>
          </div>
          <div role="tablist" className="flex h-5 shrink-0 items-start pl-px">
            <button type="button" role="tab" aria-selected="true" className="h-[18px] bg-[#fafafa] px-[9px] pt-px">File List</button>
            <button type="button" role="tab" aria-selected="false" className="h-[18px] bg-[#f3f3f3] px-2 pt-px">Pairs</button>
            <button type="button" role="tab" aria-selected="false" className="h-[18px] bg-[#f3f3f3] px-[9px] pt-px">Combinations</button>
          </div>
        </section>

        <section className="flex min-w-0 flex-[564] basis-0">
          <div className="flex pb-[2px]"><DockTitle>Alignment</DockTitle></div>
          <div className="flex min-w-0 flex-1 flex-col gap-[5px] pt-2 pr-[7px] pb-2 pl-[9px]">
            <div className="min-h-0 flex-[194] basis-0 border border-[#a0a0a0] bg-white p-px">
              <RollChart />
            </div>
            <div className="flex min-h-0 flex-[404] basis-0 gap-[6px] border border-[#a0a0a0] bg-[#f0f0f0] p-px">
              <div className="min-w-0 flex-[282] basis-0"><PitchChart /></div>
              <div className="min-w-0 flex-[239] basis-0"><HeadingChart /></div>
            </div>
          </div>
        </section>
      </main>

      <footer className="flex h-[21px] shrink-0 gap-[3px] pt-px">
        <Pane className="flex-[617] basis-0">
          <span>Along:</span><span className="pl-4">-1.84</span><span className="pl-[5px]">Height:</span><span className="pl-[14px]">-9.43</span>
        </Pane>
        <Pane className="flex-[458] basis-0 gap-1">
          {[["Mean:", "0.00"], ["Span:", "0.00"], ["95%Conf:", "0.00"], ["Count:", "0"], ["AvgSDEV:", "6.796 cm"], ["AvgERROR:", "9.879 cm"]].map(([k, v]) => (
            <span key={k} className="flex gap-[6px]"><span>{k}</span><span>{v}</span></span>
          ))}
        </Pane>
        <Pane className="w-[46px]">POS HGT</Pane>
        <Pane className="w-[70px]">LOCAL GRID[1]</Pane>
      </footer>
    </div>
  );
}
